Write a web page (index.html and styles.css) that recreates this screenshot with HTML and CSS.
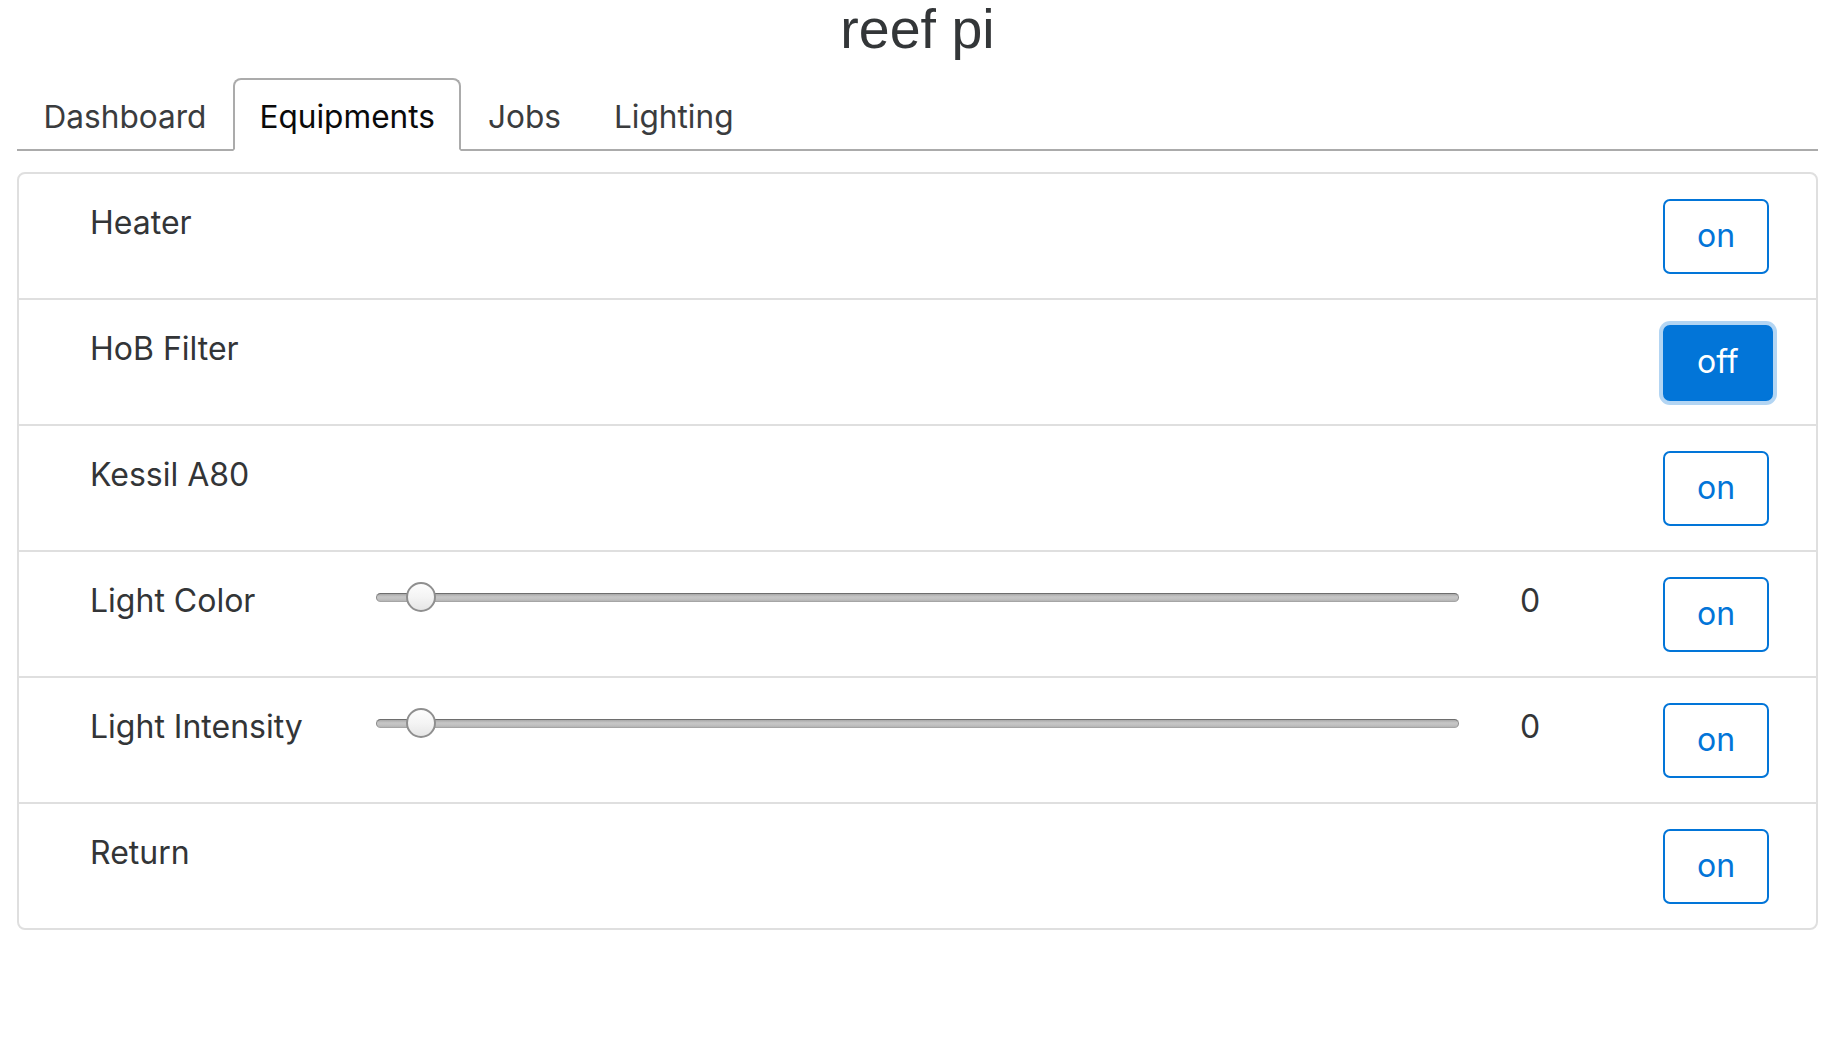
FILE: index.html
```html
<!DOCTYPE html>
<html lang="en">
<head>
<meta charset="utf-8">
<title>reef pi</title>
<link rel="stylesheet" href="styles.css">
</head>
<body>
<div class="page">
  <div class="title">reef pi</div>
  <nav class="tabs">
    <a class="tab">Dashboard</a>
    <a class="tab active">Equipments</a>
    <a class="tab">Jobs</a>
    <a class="tab">Lighting</a>
  </nav>
  <div class="card">
    <div class="item">
      <div class="cell name">Heater</div>
      <div class="cell"></div>
      <div class="cell"></div>
      <div class="cell"><button class="btn">on</button></div>
    </div>
    <div class="item">
      <div class="cell name">HoB Filter</div>
      <div class="cell"></div>
      <div class="cell"></div>
      <div class="cell"><button class="btn btn-active">off</button></div>
    </div>
    <div class="item">
      <div class="cell name">Kessil A80</div>
      <div class="cell"></div>
      <div class="cell"></div>
      <div class="cell"><button class="btn">on</button></div>
    </div>
    <div class="item">
      <div class="cell name">Light Color</div>
      <div class="cell"><div class="slider"><input type="range" min="0" max="100" step="any" value="2.76"></div></div>
      <div class="cell value">0</div>
      <div class="cell"><button class="btn">on</button></div>
    </div>
    <div class="item">
      <div class="cell name">Light Intensity</div>
      <div class="cell"><div class="slider"><input type="range" min="0" max="100" step="any" value="2.76"></div></div>
      <div class="cell value">0</div>
      <div class="cell"><button class="btn">on</button></div>
    </div>
    <div class="item">
      <div class="cell name">Return</div>
      <div class="cell"></div>
      <div class="cell"></div>
      <div class="cell"><button class="btn">on</button></div>
    </div>
  </div>
</div>
</body>
</html>
```
FILE: styles.css
```css
html, body {
  margin: 0;
  padding: 0;
  background: #fff;
}

body {
  font-family: Inter, "Noto Sans", sans-serif;
  color: #333537;
}

.page {
  margin-left: 17px;
  width: 1801px;
}

.title {
  font-family: "Liberation Sans", Arial, sans-serif;
  font-size: 55.5px;
  line-height: 61px;
  margin-top: -1px;
  text-align: center;
  color: #333638;
}

.tabs {
  display: flex;
  gap: 0;
  margin-top: 18px;
  border-bottom: 2px solid #ababab;
}

.tab {
  display: block;
  font-size: 31.6px;
  line-height: 46.5px;
  padding: 14px 24.5px 8.5px 24.5px;
  border: 2px solid transparent;
  border-radius: 8px 8px 0 0;
  margin-bottom: -2px;
  color: #3a3c3e;
}

.tab.active {
  border-color: #ababab #ababab #fff;
  background: #fff;
  color: #0a0a0a;
}

.card {
  margin-top: 21px;
  border: 2px solid #dfdfdf;
  border-radius: 8px;
}

.item {
  display: grid;
  grid-template-columns: 286px 1144px 143px 143px;
  height: 75px;
  padding: 24.5px 40.5px;
}

.item + .item {
  border-top: 2px solid #dfdfdf;
}

.cell {
  box-sizing: border-box;
  padding: 0 30.5px;
  height: 75px;
}

.name, .value {
  font-size: 32px;
  line-height: 46.5px;
  padding-top: 1.5px;
  color: #333537;
  white-space: nowrap;
}

.btn {
  height: 75px;
  padding: 0 32px;
  border: 2px solid #0275d8;
  border-radius: 7px;
  background: #fff;
  color: #0275d8;
  font-family: Inter, "Noto Sans", sans-serif;
  font-size: 32px;
  line-height: 46.5px;
  margin: 0;
}

.btn-active {
  background: #0275d8;
  color: #fff;
  height: 76px;
  box-shadow: 0 0 0 4px rgba(2, 117, 216, 0.3);
}

.slider {
  height: 41px;
  display: flex;
  align-items: center;
}

.slider input {
  -webkit-appearance: none;
  appearance: none;
  width: 100%;
  height: 32px;
  margin: 0;
  background: transparent;
}

.slider input::-webkit-slider-runnable-track {
  height: 9px;
  box-sizing: border-box;
  border-radius: 5px;
  border: 1px solid #8a8a8a;
  border-top-color: #6e6e6e;
  border-bottom-color: #a5a5a5;
  background: linear-gradient(#a8a8a8, #c6c6c6 40%, #c2c2c2 70%, #b4b4b4);
}

.slider input::-webkit-slider-thumb {
  -webkit-appearance: none;
  appearance: none;
  width: 30px;
  height: 30px;
  box-sizing: border-box;
  border-radius: 50%;
  border: 2px solid #8f8f8f;
  background: linear-gradient(#fdfdfd, #f4f4f4 50%, #e6e6e6);
  margin-top: -11.5px;
}
```
